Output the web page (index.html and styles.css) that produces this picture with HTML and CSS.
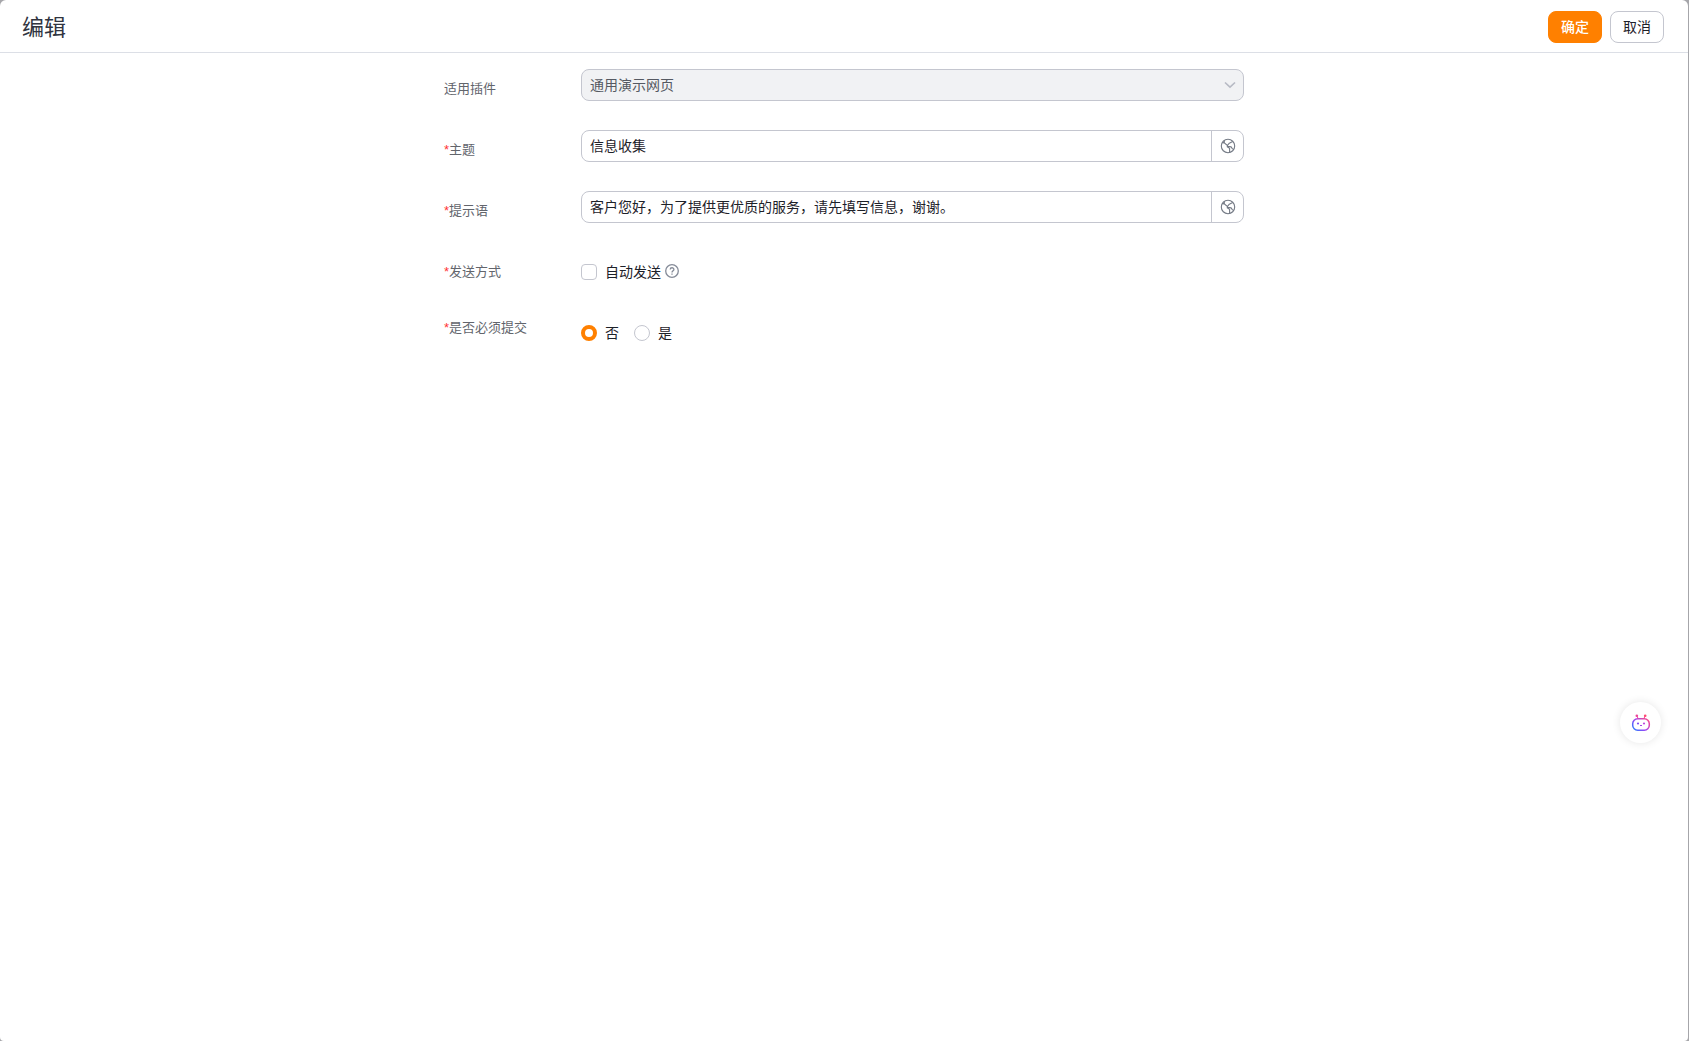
FILE: index.html
```html
<!DOCTYPE html>
<html lang="zh-CN">
<head>
<meta charset="utf-8">
<meta name="viewport" content="width=device-width, initial-scale=1">
<title>编辑</title>
<link rel="stylesheet" href="styles.css">
</head>
<body>
<main class="panel">
  <header class="header">
    <h1 class="title">编辑</h1>
    <div class="actions">
      <button class="btn btn-primary" type="submit" form="edit-form">确定</button>
      <button class="btn" type="button">取消</button>
    </div>
  </header>

  <form class="form" id="edit-form">
    <div class="row">
      <label class="label" for="plugin">适用插件</label>
      <div class="select-box">
        <select class="select" id="plugin" disabled>
          <option>通用演示网页</option>
        </select>
        <svg class="chevron" width="12" height="12" viewBox="0 0 12 12" aria-hidden="true"><path d="M1 3.5l5 4.7 5-4.7" fill="none" stroke="currentColor" stroke-width="1.6"/></svg>
      </div>
    </div>

    <div class="row">
      <label class="label" for="subject"><span class="required">*</span>主题</label>
      <div class="group">
        <input class="input" id="subject" type="text" value="信息收集">
        <button class="addon" type="button" aria-label="多语言">
          <svg width="16" height="16" viewBox="0 0 16 16" fill="none" stroke="currentColor" stroke-width="1.1" stroke-linejoin="round" aria-hidden="true"><circle cx="8" cy="8" r="6.700"/><path d="M4.300 2.700v2.200l3.200 2.600 1.800-2.300 3.400-1.700M2.500 4.600l1.800.3M7.500 7.500l-.3 1.300 2.400 1.600v3.900M7.400 8.400l3.700.5 1.600 2.300"/></svg>
        </button>
      </div>
    </div>

    <div class="row">
      <label class="label" for="hint"><span class="required">*</span>提示语</label>
      <div class="group">
        <input class="input" id="hint" type="text" value="客户您好，为了提供更优质的服务，请先填写信息，谢谢。">
        <button class="addon" type="button" aria-label="多语言">
          <svg width="16" height="16" viewBox="0 0 16 16" fill="none" stroke="currentColor" stroke-width="1.1" stroke-linejoin="round" aria-hidden="true"><circle cx="8" cy="8" r="6.700"/><path d="M4.300 2.700v2.200l3.200 2.600 1.800-2.300 3.400-1.700M2.500 4.600l1.800.3M7.500 7.500l-.3 1.300 2.400 1.600v3.900M7.400 8.400l3.700.5 1.600 2.300"/></svg>
        </button>
      </div>
    </div>

    <div class="row" role="group" aria-labelledby="send-label">
      <span class="label" id="send-label"><span class="required">*</span>发送方式</span>
      <div class="choices">
        <label class="choice"><input class="mark checkbox" type="checkbox"><span class="choice-text">自动发送</span></label>
        <svg class="help" width="14" height="14" viewBox="0 0 14 14" fill="none" stroke="currentColor" role="img" aria-label="帮助"><circle cx="7" cy="7" r="6.300" stroke-width="1.300"/><path d="M5.200 5.500c0-2.300 3.700-2.300 3.700-.1C8.900 6.700 7 6.800 7 8.500M7 9.600v1.200" stroke-width="1.300"/></svg>
      </div>
    </div>

    <div class="row" role="radiogroup" aria-labelledby="submit-label">
      <span class="label label-high" id="submit-label"><span class="required">*</span>是否必须提交</span>
      <div class="choices">
        <label class="choice"><input class="mark radio" type="radio" name="must" checked><span class="choice-text">否</span></label>
        <label class="choice"><input class="mark radio" type="radio" name="must"><span class="choice-text">是</span></label>
      </div>
    </div>
  </form>
</main>

<button class="assistant" type="button" aria-label="智能助手">
  <svg width="20" height="18" viewBox="0 0 20 18" fill="none" aria-hidden="true">
    <defs>
      <linearGradient id="bot" x1="2" y1="17" x2="16" y2="3" gradientUnits="userSpaceOnUse">
        <stop offset="0" stop-color="#1686ff"/>
        <stop offset=".45" stop-color="#9a45f5"/>
        <stop offset="1" stop-color="#ff4b82"/>
      </linearGradient>
    </defs>
    <rect x="1.700" y="4.700" width="16.600" height="11.600" rx="5" stroke="url(#bot)" stroke-width="1.500"/>
    <path d="M6 2l1 2.500M14 2l-1 2.500" stroke="#f04a96"/>
    <circle cx="5.800" cy="1.800" r="1.300" fill="#ee4499"/>
    <circle cx="14.200" cy="1.800" r="1.300" fill="#ff4a72"/>
    <circle cx="7" cy="9.500" r="1.100" fill="#804df5"/>
    <circle cx="13" cy="9.500" r="1.100" fill="#bd48df"/>
    <path d="M9 11.300q1 .8 2 0" stroke="#a049e8"/>
  </svg>
</button>
</body>
</html>
```
FILE: styles.css
```css
* {
  box-sizing: border-box;
}

body {
  margin: 0;
  padding-right: 1px;
  background: #a6a6aa;
  color: #1d2129;
  font: 14px/20px "Noto Sans CJK SC", sans-serif;
}

button,
input,
select {
  margin: 0;
  color: inherit;
  font: inherit;
}

.panel {
  min-height: 100vh;
  border-radius: 6px 6px 4px 4px;
  background: #fff;
}

.header {
  display: flex;
  align-items: center;
  justify-content: space-between;
  padding: 11px 24px 9px 22px;
  border-bottom: 1px solid #dcdfe6;
}

.title {
  margin: 0;
  padding-bottom: 4px;
  color: #303440;
  font-size: 22px;
  font-weight: 400;
  line-height: 28px;
}

.actions {
  display: flex;
  gap: 8px;
}

.btn {
  height: 32px;
  padding: 0 12px 2px;
  border: 1px solid #c4c6cf;
  border-radius: 8px;
  background: #fff;
}

.btn-primary {
  border-color: #ff8000;
  background: #ff8000;
  color: #fff;
  font-weight: 500;
}

.form {
  display: grid;
  gap: 29px;
  max-width: 800px;
  margin: 0 auto;
  padding: 16px 0;
}

.row {
  display: grid;
  grid-template-columns: 137px minmax(0, 1fr);
  align-items: start;
}

.label {
  padding-top: 7px;
  color: #62656c;
  font-size: 13px;
  line-height: 24px;
}

.label-high {
  padding-top: 2px;
}

.required {
  color: #f33;
  font-family: "Liberation Sans", sans-serif;
}

.select-box {
  display: grid;
  align-items: center;
}

.select,
.chevron {
  grid-area: 1 / 1;
}

.select {
  appearance: none;
  width: 100%;
  height: 32px;
  padding: 0 32px 2px 8px;
  border: 1px solid #c4c6cf;
  border-radius: 8px;
  background: #f1f2f4;
  color: #555962;
  opacity: 1;
}

.chevron {
  justify-self: end;
  margin-right: 8px;
  color: #b7bac4;
}

.group {
  display: flex;
  height: 32px;
  border: 1px solid #c4c6cf;
  border-radius: 8px;
}

.input {
  flex: 1;
  min-width: 0;
  padding: 0 8px 2px;
  border: 0;
  border-radius: 8px;
  background: none;
}

.addon {
  display: grid;
  place-items: center;
  width: 32px;
  padding: 0;
  border: 0;
  border-left: 1px solid #c4c6cf;
  background: none;
  color: #747a85;
}

.choices {
  display: flex;
  align-items: center;
  height: 24px;
  margin-top: 8px;
}

.choice {
  display: flex;
  align-items: center;
  gap: 8px;
}

.choice + .choice {
  margin-left: 15px;
}

.choice-text {
  padding-bottom: 2px;
}

.mark {
  appearance: none;
  width: 16px;
  height: 16px;
  border: 1px solid #c4c6cf;
  background: #fff;
}

.checkbox {
  border-radius: 4px;
}

.radio {
  border-radius: 50%;
}

.radio:checked {
  border: 4px solid #ff8000;
}

.help {
  margin-bottom: 2px;
  margin-left: 4px;
  color: #858b98;
}

.assistant {
  position: fixed;
  right: 28px;
  bottom: 298px;
  display: grid;
  place-items: center;
  width: 41px;
  height: 41px;
  padding: 0;
  border: 0;
  border-radius: 50%;
  background: #fff;
  box-shadow: 0 0 8px rgba(0, 0, 0, 0.1);
}
```
